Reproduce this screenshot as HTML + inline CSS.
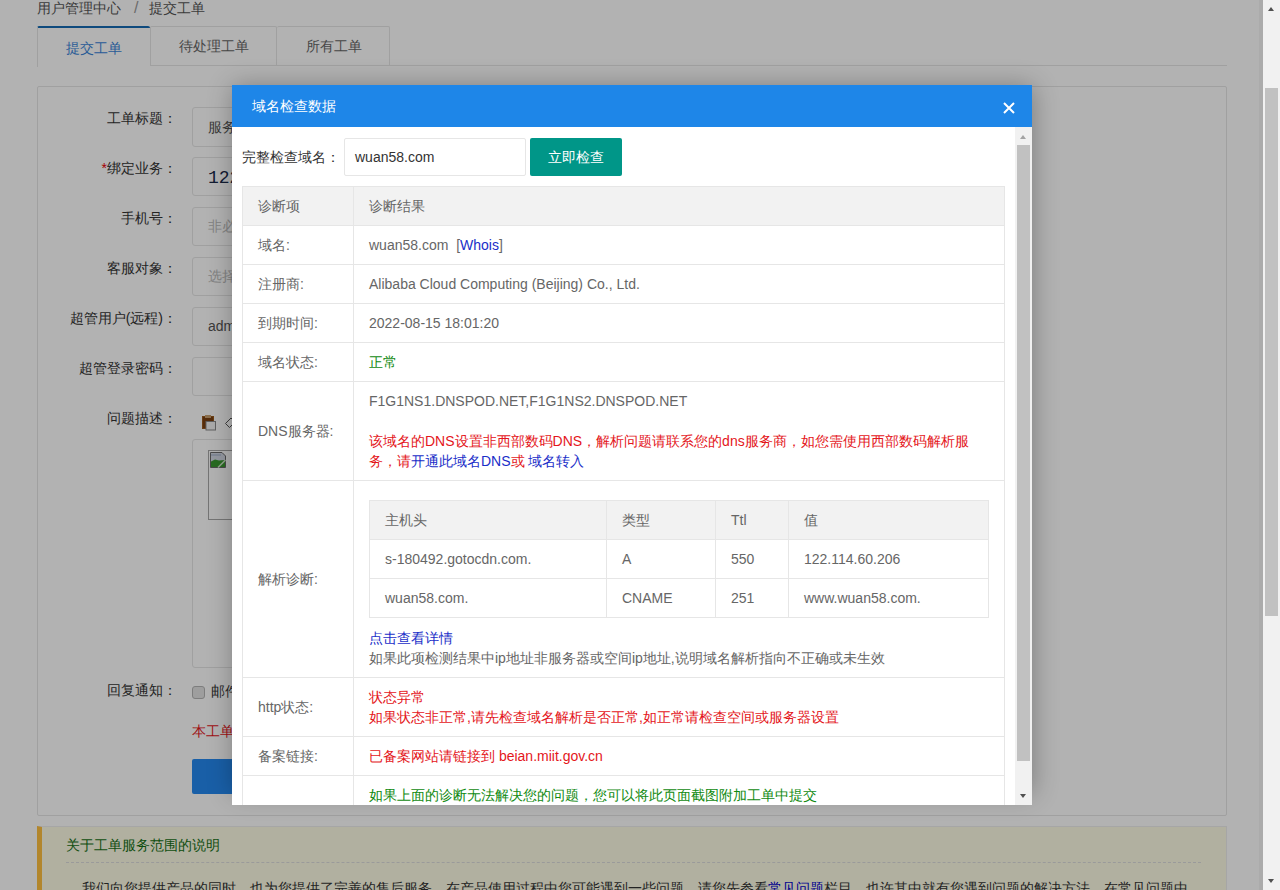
<!DOCTYPE html>
<html><head><meta charset="utf-8">
<style>
*{margin:0;padding:0;box-sizing:border-box}
html,body{width:1280px;height:890px;overflow:hidden;background:#fff}
body{font-family:"Liberation Sans",sans-serif;font-size:14px;color:#333;position:relative}
.abs{position:absolute}
/* page */
.crumb{left:37px;top:-2px;line-height:20px;color:#555}
.crumb .sep{color:#999;margin:0 11px 0 13px;font-size:16px;font-family:"Liberation Sans",sans-serif}
.tabbar{left:37px;top:26px;width:1190px;height:40px;border-bottom:1px solid #e6e6e6}
.tab{position:absolute;top:0;height:40px;line-height:39px;text-align:center;border:1px solid #e6e6e6;border-bottom:none;color:#666;border-radius:2px 2px 0 0}
.tab.on{border-top:2px solid #156bb3;border-right:none;color:#3a84d8;background:#fff;height:41px;line-height:40px}
.panel{left:37px;top:86px;width:1190px;height:730px;border:1px solid #e6e6e6;border-radius:2px}
.lbl{position:absolute;width:143px;text-align:right;line-height:20px;color:#333}
.inp{position:absolute;left:192px;height:39px;width:600px;border:1px solid #e6e6e6;border-radius:3px;line-height:37px;padding-left:15px;color:#555}
.note{left:37px;top:826px;width:1190px;height:80px;background:#fefde6;border:1px solid #eee;border-left:5px solid #ffc040}
.shade{left:0;top:0;width:1263px;height:890px;background:rgba(0,0,0,.3)}
/* scrollbar */
.sb{left:1263px;top:0;width:17px;height:890px;background:#f1f1f1}
.thumb{position:absolute;left:2px;width:13px;background:#c1c1c1}
.arr{position:absolute;left:4px;width:0;height:0;border-left:4.5px solid transparent;border-right:4.5px solid transparent}
/* modal */
.modal{left:232px;top:85px;width:800px;height:720px;background:#fff}
.mshadow{left:232px;top:85px;width:800px;height:708px;box-shadow:1px 1px 24px rgba(0,0,0,.3)}
.mtitle{position:absolute;left:0;top:0;width:800px;height:42px;background:#1e86e8;color:#fff;line-height:42px;padding-left:20px;font-size:14px}
.close{position:absolute;left:771px;top:17px;width:12px;height:12px}
.mbody{position:absolute;left:0;top:42px;width:784px;height:678px;overflow:hidden}
.msb{position:absolute;left:783px;top:42px;width:17px;height:678px;background:#f1f1f1}
table{border-collapse:collapse;table-layout:fixed}
td,th{border:1px solid #e6e6e6;padding:9px 15px;line-height:20px;white-space:nowrap;overflow:hidden;text-align:left;font-weight:normal;color:#666;vertical-align:middle}
.red{color:#e4161b}
.blue{color:#1a2ec8}
.green{color:#108a10}
</style></head><body>
<div class="abs crumb">用户管理中心<span class="sep">/</span>提交工单</div>
<div class="abs tabbar">
  <div class="tab on" style="left:0;width:113px">提交工单</div>
  <div class="tab" style="left:113px;width:127px">待处理工单</div>
  <div class="tab" style="left:240px;width:113px;border-left:none;padding-left:2px">所有工单</div>
</div>
<div class="abs panel">
</div>
<div class="lbl" style="left:34px;top:108px">工单标题：</div>
<div class="inp" style="top:107px;height:40px;line-height:38px">服务</div>
<div class="lbl" style="left:34px;top:158px"><span style="color:#e00">*</span>绑定业务：</div>
<div class="inp" style="top:157px;font-size:18px;line-height:40px;color:#1b2a4a;font-family:'Liberation Mono',monospace">122</div>
<div class="lbl" style="left:34px;top:208px">手机号：</div>
<div class="inp" style="top:207px;color:#bbb">非必</div>
<div class="lbl" style="left:34px;top:258px">客服对象：</div>
<div class="inp" style="top:257px;color:#bbb">选择</div>
<div class="lbl" style="left:0px;width:177px;top:308px">超管用户(远程)：</div>
<div class="inp" style="top:307px">admin</div>
<div class="lbl" style="left:34px;top:358px">超管登录密码：</div>
<div class="inp" style="top:357px"></div>
<div class="lbl" style="left:34px;top:408px">问题描述：</div>
<div class="inp" style="top:439px;height:229px"></div>
<svg class="abs" style="left:200px;top:413px" width="18" height="19" viewBox="0 0 18 19">
  <rect x="2" y="3" width="12" height="13" fill="#9a5a1e"/>
  <rect x="3" y="4" width="10" height="11" fill="#7a4010"/>
  <rect x="5" y="2" width="6" height="3" fill="#c8a070"/>
  <rect x="6" y="8.5" width="9.5" height="8.5" fill="#f4f4f4" stroke="#8a8a8a" stroke-width="1"/>
</svg>
<svg class="abs" style="left:223px;top:414px" width="12" height="17" viewBox="0 0 12 17">
  <path d="M2.5 9.5L8 4L12 8L6.5 13.5Z" fill="none" stroke="#555" stroke-width="1"/>
</svg>
<div class="abs" style="left:208px;top:450px;width:40px;height:70px;border:1px solid #a8a8a8;border-right:none"></div>
<svg class="abs" style="left:209px;top:451px" width="18" height="18" viewBox="0 0 18 18">
  <path d="M1.5 1.5H13L16.5 5V16.5H1.5Z" fill="#d4dae6" stroke="#6a6a6a" stroke-width="1"/>
  <path d="M2 5H12V3H2Z" fill="#b9c3d6"/>
  <path d="M2 10.5L6 8.5L10 9.5L16 9V16H2Z" fill="#3a9a30"/>
  <path d="M9 16.5L16.5 9" stroke="#cfe8c8" stroke-width="1.6"/>
</svg>
<div class="lbl" style="left:34px;top:680px">回复通知：</div>
<div class="abs" style="left:192px;top:686px;width:13px;height:13px;border:1px solid #b4b4b4;border-radius:3px;background:#e2e2e2"></div>
<div class="abs" style="left:211px;top:681px;line-height:20px">邮件</div>
<div class="abs red" style="left:192px;top:721px;line-height:20px">本工单</div>
<div class="abs" style="left:192px;top:759px;width:120px;height:35px;background:#2589f0;border-radius:2px"></div>
<div class="abs note">
  <div class="abs green" style="left:24px;top:8px;line-height:20px;color:#167016">关于工单服务范围的说明</div>
  <div class="abs" style="left:24px;top:35px;width:1135px;border-top:1px dashed #ddd"></div>
  <div class="abs" style="left:40px;top:51px;line-height:20px;white-space:nowrap">我们向您提供产品的同时，也为您提供了完善的售后服务。在产品使用过程中您可能遇到一些问题，请您先参看<span style="color:#00c">常见问题</span>栏目，也许其中就有您遇到问题的解决方法，在常见问题中</div>
</div>
<div class="abs shade"></div>
<div class="abs" style="left:1259px;top:0;width:4px;height:890px;background:rgba(0,0,0,.035)"></div>
<div class="abs sb">
  <div class="arr" style="left:5px;top:7px;border-left-width:3.5px;border-right-width:3.5px;border-bottom:4px solid #505050"></div>
  <div class="thumb" style="top:88px;height:528px"></div>
  <div class="arr" style="left:5px;top:879px;border-left-width:3.5px;border-right-width:3.5px;border-top:4px solid #505050"></div>
</div>

<div class="abs mshadow"></div>
<div class="abs modal">
  <div class="mtitle">域名检查数据</div>
  <svg class="close" viewBox="0 0 12 12"><path d="M1 1L11 11M11 1L1 11" stroke="#fff" stroke-width="2"/></svg>
  <div class="mbody">
    <div class="abs" style="left:10px;top:20px;line-height:20px;color:#333">完整检查域名：</div>
    <div class="abs" style="left:112px;top:11px;width:182px;height:38px;border:1px solid #e6e6e6;border-radius:2px;line-height:36px;padding-left:10px;color:#333">wuan58.com</div>
    <div class="abs" style="left:298px;top:11px;width:92px;height:38px;background:#009688;border-radius:2px;line-height:38px;color:#fff;text-align:center">立即检查</div>
    <table class="abs" style="left:10px;top:59px;width:763px">
      <colgroup><col style="width:111px"><col></colgroup>
      <tr style="background:#f2f2f2"><td>诊断项</td><td>诊断结果</td></tr>
      <tr><td>域名:</td><td>wuan58.com &nbsp;[<span class="blue">Whois</span>]</td></tr>
      <tr><td>注册商:</td><td>Alibaba Cloud Computing (Beijing) Co., Ltd.</td></tr>
      <tr><td>到期时间:</td><td>2022-08-15 18:01:20</td></tr>
      <tr><td>域名状态:</td><td class="green">正常</td></tr>
      <tr><td>DNS服务器:</td><td>F1G1NS1.DNSPOD.NET,F1G1NS2.DNSPOD.NET<br><br><span class="red">该域名的DNS设置非西部数码DNS，解析问题请联系您的dns服务商，如您需使用西部数码解析服<br>务，请</span><span class="blue">开通此域名DNS</span><span class="red">或</span> <span class="blue">域名转入</span></td></tr>
      <tr><td>解析诊断:</td><td>
        <table style="width:620px;margin:10px 0">
          <colgroup><col style="width:237px"><col style="width:109px"><col style="width:73px"><col></colgroup>
          <tr style="background:#f2f2f2"><td>主机头</td><td>类型</td><td>Ttl</td><td>值</td></tr>
          <tr><td>s-180492.gotocdn.com.</td><td>A</td><td>550</td><td>122.114.60.206</td></tr>
          <tr><td>wuan58.com.</td><td>CNAME</td><td>251</td><td>www.wuan58.com.</td></tr>
        </table>
        <span class="blue">点击查看详情</span><br>如果此项检测结果中ip地址非服务器或空间ip地址,说明域名解析指向不正确或未生效</td></tr>
      <tr><td>http状态:</td><td class="red">状态异常<br>如果状态非正常,请先检查域名解析是否正常,如正常请检查空间或服务器设置</td></tr>
      <tr><td>备案链接:</td><td class="red">已备案网站请链接到 beian.miit.gov.cn</td></tr>
      <tr><td></td><td class="green">如果上面的诊断无法解决您的问题，您可以将此页面截图附加工单中提交</td></tr>
    </table>
  </div>
  <div class="msb">
    <div class="arr" style="left:5px;top:8px;border-left-width:3.5px;border-right-width:3.5px;border-bottom:4px solid #a3a3a3"></div>
    <div class="thumb" style="left:2px;top:18px;width:13px;height:616px"></div>
    <div class="arr" style="left:5px;top:667px;border-left-width:3.5px;border-right-width:3.5px;border-top:4px solid #505050"></div>
  </div>
</div>
</body></html>
